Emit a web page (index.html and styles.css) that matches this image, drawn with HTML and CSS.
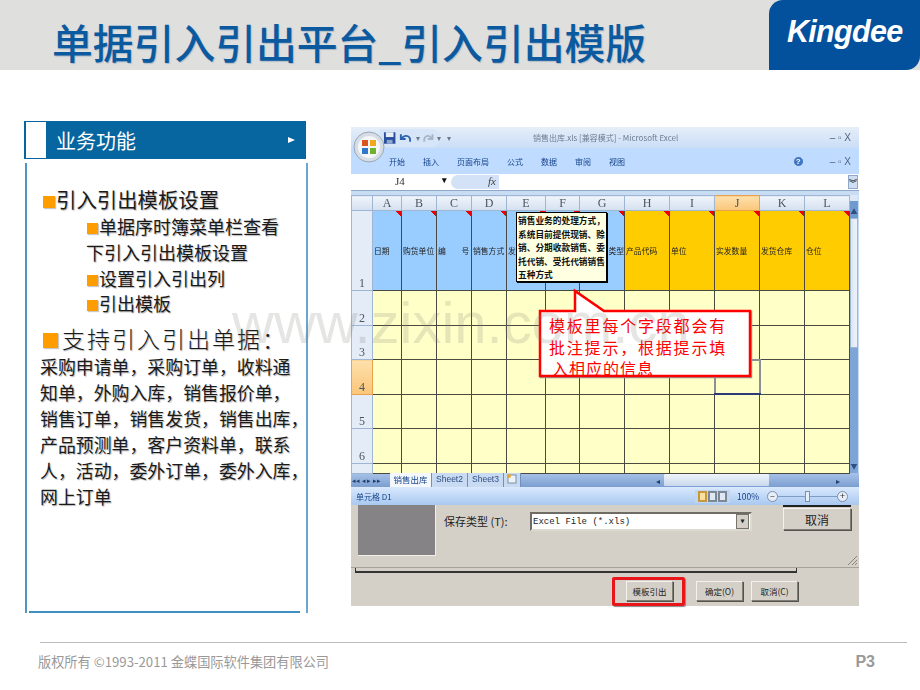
FILE: index.html

```html
<!DOCTYPE html>
<html lang="zh-CN">
<head>
  <meta charset="UTF-8">
  <title>单据引入引出平台_引入引出模版</title>
  <link rel="stylesheet" href="styles.css">
</head>
<body>
  <div class="slide">
    <header class="top">
      <h1>单据引入引出平台_引入引出模版</h1>
      <div class="logo">Kingdee</div>
    </header>

    <main class="content">
      <section class="side">
        <div class="side-title">
          <span class="side-box"></span>
          <span class="side-name">业务功能</span>
          <span class="side-arrow"></span>
        </div>
        <div class="side-panel">
          <p class="lv1"><i class="dot"></i>引入引出模板设置</p>
          <p class="lv2"><i class="dot small"></i>单据序时簿菜单栏查看</p>
          <p class="lv2">下引入引出模板设置</p>
          <p class="lv2"><i class="dot small"></i>设置引入引出列</p>
          <p class="lv2"><i class="dot small"></i>引出模板</p>
          <p class="lv1 big"><i class="dot large"></i>支持引入引出单据：</p>
          <p class="bills">采购申请单，采购订单，收料通<br>知单，外购入库，销售报价单，<br>销售订单，销售发货，销售出库，<br>产品预测单，客户资料单，联系<br>人，活动，委外订单，委外入库，<br>网上订单</p>
        </div>
      </section>

      <section class="shot">
        <div class="xl">
          <div class="xl-title">
            <div class="qat">
              <svg width="14" height="14" viewBox="0 0 14 14"><rect x="1" y="1" width="12" height="12" fill="#2a4f9c"/><rect x="3" y="1" width="8" height="5" fill="#e8eef8"/><rect x="4" y="9" width="6" height="4" fill="#8fa8d0"/></svg>
              <svg width="16" height="14" viewBox="0 0 16 14"><path d="M3 3v5h5M3.500 8C6 4 10 4 12 6.500c1 1.500 1 3 .5 4.500" fill="none" stroke="#2b62b0" stroke-width="2"/></svg>
              <span class="qat-drop">▾</span>
              <svg width="14" height="14" viewBox="0 0 14 14"><path d="M11 3v5H6M10.500 8C8 4 5 4 3 6.500c-1 1.500-1 3-.5 4.500" fill="none" stroke="#a9b6c8" stroke-width="2"/></svg>
              <span class="qat-drop">▾</span>
            </div>
            <span class="qat-more">▾</span>
            <span class="xl-name">销售出库.xls [兼容模式] - Microsoft Excel</span>
            <span class="win-btns">– ▫ X</span>
          </div>
          <div class="xl-tabs">
            <span>开始</span><span>插入</span><span>页面布局</span><span>公式</span><span>数据</span><span>审阅</span><span>视图</span>
            <span class="help">?</span>
            <span class="win-btns dark">– ▫ X</span>
          </div>
          <div class="xl-formula">
            <div class="name-box"><span>J4</span><b>▾</b></div>
            <div class="fx"><em>fx</em></div>
            <div class="formula-input"></div>
            <div class="formula-more">︾</div>
          </div>

          <div class="sheet-wrap">
            <table class="sheet">
              <colgroup>
                <col class="c-head"><col class="c-a"><col class="c-m"><col class="c-m"><col class="c-m"><col class="c-e"><col class="c-f"><col class="c-l"><col class="c-l"><col class="c-l"><col class="c-l"><col class="c-l"><col class="c-z">
              </colgroup>
              <tr class="letters">
                <th class="corner"></th><th>A</th><th>B</th><th>C</th><th>D</th><th>E</th><th>F</th><th>G</th><th>H</th><th>I</th><th class="on">J</th><th>K</th><th>L</th>
              </tr>
              <tr class="r1">
                <th>1</th>
                <td class="blue">日期</td><td class="blue">购货单位</td><td class="blue">编　　号</td><td class="blue">销售方式</td><td class="blue">发</td><td class="blue"></td><td class="blue end">务类型</td>
                <td class="gold">产品代码</td><td class="gold">单位</td><td class="gold">实发数量</td><td class="gold">发货仓库</td><td class="gold">仓位</td>
              </tr>
              <tr class="r"><th>2</th><td></td><td></td><td></td><td></td><td></td><td></td><td></td><td></td><td></td><td></td><td></td><td></td></tr>
              <tr class="r"><th>3</th><td></td><td></td><td></td><td></td><td></td><td></td><td></td><td></td><td></td><td></td><td></td><td></td></tr>
              <tr class="r"><th class="on">4</th><td></td><td></td><td></td><td></td><td></td><td></td><td></td><td></td><td></td><td class="picked"></td><td></td><td></td></tr>
              <tr class="r"><th>5</th><td></td><td></td><td></td><td></td><td></td><td></td><td></td><td></td><td></td><td></td><td></td><td></td></tr>
              <tr class="r"><th>6</th><td></td><td></td><td></td><td></td><td></td><td></td><td></td><td></td><td></td><td></td><td></td><td></td></tr>
              <tr class="r-cut"><th></th><td></td><td></td><td></td><td></td><td></td><td></td><td></td><td></td><td></td><td></td><td></td><td></td></tr>
            </table>
            <div class="vscroll">
              <span class="v-cap"></span>
              <span class="v-up">▲</span>
              <span class="v-thumb"></span>
              <span class="v-down">▼</span>
            </div>
          </div>

          <div class="sheet-tabs">
            <span class="tab-nav">◂◂ ◂ ▸ ▸▸</span>
            <span class="tab active">销售出库</span>
            <span class="tab">Sheet2</span>
            <span class="tab">Sheet3</span>
            <span class="tab add">
              <svg width="12" height="11" viewBox="0 0 12 11"><rect x="2" y="2" width="8" height="8" fill="#eef3fa" stroke="#7f8fa8"/><circle cx="3" cy="3" r="2" fill="#e6a92f"/></svg>
            </span>
            <div class="hscroll"><span class="h-left">◂</span><span class="h-thumb"></span><span class="h-right">▸</span></div>
          </div>

          <div class="status">
            <span class="status-text">单元格 D1</span>
            <div class="status-views"><i class="view on"></i><i class="view"></i><i class="view"></i></div>
            <span class="zoom-val">100%</span>
            <span class="zoom-btn">–</span>
            <span class="zoom-track"><i></i></span>
            <span class="zoom-btn">+</span>
          </div>
        </div>

        <div class="dialog">
          <div class="preview"></div>
          <label class="type-label">保存类型 (T):</label>
          <div class="type-select"><span>Excel File (*.xls)</span><b>▾</b></div>
          <div class="dialog-side"><button class="win-btn wide">取消</button></div>
          <svg class="grip" width="12" height="12" viewBox="0 0 12 12"><path d="M11 2 2 11M11 6l-5 5M11 9l-2 2" stroke="#8a877f" fill="none"/></svg>
        </div>
        <div class="frame-line"></div>
        <div class="actions">
          <div class="mark"><button class="win-btn">模板引出</button></div>
          <button class="win-btn">确定(O)</button>
          <button class="win-btn">取消(C)</button>
        </div>

        <div class="comment">销售业务的处理方式，<br>系统目前提供现销、赊<br>销、分期收款销售、委<br>托代销、受托代销销售<br>五种方式</div>
        <div class="callout">
          <svg width="216" height="92" viewBox="0 0 216 92"><path d="M2 23H37V3L66 23H212V88H2Z" fill="#fff" stroke="#ff0000" stroke-width="2.500"/></svg>
          <p>模板里每个字段都会有<br>批注提示，根据提示填<br><span>入相应的信息</span></p>
        </div>
        <!-- Office button sits over the title bar and the ribbon -->
        <svg class="orb" width="32" height="32" viewBox="0 0 32 32">
          <circle cx="16" cy="16" r="15" fill="#d6dde6" stroke="#9aa7b6"/>
          <circle cx="16" cy="16" r="11" fill="#f4f6f8"/>
          <rect x="9" y="9" width="6" height="6" fill="#d9541e"/>
          <rect x="17" y="9" width="6" height="6" fill="#f0a81c"/>
          <rect x="9" y="17" width="6" height="6" fill="#2f77c8"/>
          <rect x="17" y="17" width="6" height="6" fill="#6fb22e"/>
        </svg>
      </section>
    </main>

    <footer class="foot">
      <span>版权所有 ©1993-2011 金蝶国际软件集团有限公司</span>
      <b>P3</b>
    </footer>

    <div class="stamp">www.zixin.com.cn</div>
  </div>
</body>
</html>
```

FILE: styles.css

```css
* {
  box-sizing: border-box;
}
body {
  margin: 0;
  background-color: #ffffff;
  font-family: "Noto Sans CJK SC", "Liberation Sans", sans-serif;
}
p, h1 {
  margin: 0;
}
.slide {
  position: relative;
  width: 920px;
  height: 690px;
  overflow: hidden;
  background-color: #ffffff;
}

/* title band */
.top {
  display: flex;
  justify-content: space-between;
  align-items: stretch;
  height: 70px;
  background-color: #dfdfdd;
}
.top h1 {
  padding: 12px 0 0 52px;
  font-size: 40.800px;
  font-weight: 500;
  line-height: 60px;
  color: #0b5a9f;
  text-shadow: 1px 1px 1px #a9b8c8;
  white-space: nowrap;
}
.logo {
  width: 151px;
  padding: 8px 0 0 18px;
  background-color: #03509c;
  border-radius: 14px 0 14px 0;
  font-family: "Liberation Sans", sans-serif;
  font-size: 30.500px;
  font-style: italic;
  font-weight: bold;
  line-height: 46px;
  letter-spacing: -0.700px;
  color: #ffffff;
}

.content {
  display: flex;
  align-items: flex-start;
  padding: 51px 0 0 24px;
}

/* left column */
.side {
  width: 282px;
  margin-right: 45px;
}
.side-title {
  display: flex;
  align-items: center;
  height: 38px;
  padding-left: 2px;
  background-color: #07659f;
}
.side-box {
  width: 20px;
  height: 36px;
  background-color: #ffffff;
}
.side-name {
  margin-left: 10px;
  font-size: 20px;
  color: #ffffff;
}
.side-arrow {
  margin-left: 152px;
  border-left: 7px solid #ffffff;
  border-top: 3.500px solid transparent;
  border-bottom: 3.500px solid transparent;
}
.side-panel {
  width: 283px;
  height: 450px;
  margin: 4px 0 0 1px;
  padding-top: 22px;
  border-left: 2px solid #4f95c4;
  border-right: 2px solid #6aa6cf;
  background: linear-gradient(#3f8fc0, #3f8fc0) no-repeat 2px 100% / 271px 2px;
  color: #1a1a1a;
  text-shadow: 1px 1px 1px #b4b4b4;
}
.dot {
  display: inline-block;
  width: 12px;
  height: 12px;
  margin-right: 1px;
  background-color: #ff9c00;
  box-shadow: 1px 1px 1px #c8c8c8;
}
.dot.small {
  width: 11px;
  height: 11px;
  margin-left: 1px;
}
.dot.large {
  width: 15px;
  height: 15px;
  margin-right: 4px;
}
.lv1 {
  margin-bottom: 1px;
  padding-left: 16px;
  font-size: 20.400px;
  line-height: 28px;
  white-space: nowrap;
}
.lv2 {
  padding-left: 59px;
  font-size: 18px;
  line-height: 25.800px;
  white-space: nowrap;
}
.lv1.big {
  margin: 6px 0 0;
  font-size: 23px;
  font-weight: 300;
  line-height: 30px;
  letter-spacing: 2px;
}
/* TC glyphs set the full-width comma in the middle of its cell */
.bills {
  padding-left: 13px;
  font-family: "Noto Sans CJK TC", "Noto Sans CJK SC", sans-serif;
  font-size: 17.900px;
  line-height: 26px;
  white-space: nowrap;
}

/* spreadsheet picture on the right */
.shot {
  position: relative;
  width: 508px;
  height: 479px;
  margin-top: 6px;
  background-color: #d4d0c8;
  font-size: 8px;
}
.xl {
  height: 378px;
  background-color: #bfdbff;
  filter: blur(0.3px);
}
.xl-title {
  display: flex;
  align-items: center;
  height: 21px;
  padding-left: 29px;
  background: linear-gradient(#e6eef9, #cadef7);
  color: #6e7c90;
}
.qat {
  display: flex;
  align-items: center;
  gap: 2px;
  width: 61px;
  height: 18px;
  padding-left: 3px;
  background-color: #d7e5f8;
  border-radius: 0 9px 9px 0;
}
.qat-drop, .qat-more {
  font-size: 8px;
  color: #6a7a8e;
}
.qat-more {
  margin-left: 6px;
}
.xl-name {
  margin-left: 82px;
  white-space: nowrap;
}
.win-btns {
  margin-left: auto;
  padding-right: 8px;
  font-family: "Liberation Sans", sans-serif;
  font-size: 10px;
  color: #54657c;
  white-space: pre;
}
.win-btns.dark {
  margin-left: 8px;
}
.xl-tabs {
  display: flex;
  align-items: center;
  gap: 18px;
  height: 26px;
  padding-left: 38px;
  background-color: #bfdbff;
  color: #15428b;
}
.help {
  width: 11px;
  height: 11px;
  margin-left: auto;
  background-color: #3b76c8;
  border: 1px solid #d4e4f8;
  border-radius: 50%;
  font-family: "Liberation Sans", sans-serif;
  font-size: 8px;
  font-weight: bold;
  line-height: 9px;
  text-align: center;
  color: #ffffff;
}
.xl-formula {
  display: flex;
  height: 17px;
  padding: 1px;
  border-bottom: 1px solid #8fa8c8;
  background-color: #ffffff;
}
.name-box {
  display: flex;
  justify-content: space-between;
  width: 99px;
  padding: 0 4px 0 43px;
  font-family: "Liberation Serif", serif;
  font-size: 11px;
  color: #333333;
}
.name-box b {
  font-size: 9px;
  color: #111111;
}
.fx {
  width: 48px;
  padding-right: 3px;
  background-color: #d3e2f6;
  border-radius: 8px 0 0 8px;
  font-family: "Liberation Serif", serif;
  font-size: 11px;
  text-align: right;
  color: #444444;
}
.formula-input {
  flex: 1;
}
.formula-more {
  width: 10px;
  background-color: #cfdef2;
  border: 1px solid #8fa8c8;
  font-size: 8px;
  font-weight: bold;
  line-height: 13px;
  text-align: center;
  color: #222222;
}
.sheet-wrap {
  display: flex;
  height: 282px;
  padding: 4px 1px 0 0;
  background-color: #c8dcf4;
}
.sheet {
  width: 497px;
  height: 278px;
  border-collapse: collapse;
  table-layout: fixed;
}
.c-head { width: 21px; }
.c-a { width: 29px; }
.c-m { width: 35px; }
.c-e { width: 39px; }
.c-f { width: 34px; }
.c-l { width: 45px; }
.c-z { width: 45px; }
.sheet th {
  padding: 0;
  background-color: #e4ecf7;
  border: 1px solid #9fb6d2;
  font-family: "Liberation Serif", serif;
  font-size: 12px;
  font-weight: normal;
  line-height: 14px;
  color: #4a5560;
  vertical-align: bottom;
}
.sheet th.on {
  background: linear-gradient(#fde0ac, #fbc67a);
  border-color: #e8a24c;
}
.sheet td {
  padding: 0;
  background-color: #ffffc8;
  border: 1px solid #4a4a40;
}
.letters {
  height: 15px;
}
.letters th {
  background: linear-gradient(#f0f4fa, #d4e0f0);
  vertical-align: middle;
}
.r1 {
  height: 80px;
}
.r1 td {
  padding-left: 1px;
  font-size: 7.800px;
  color: #222222;
  white-space: nowrap;
  overflow: hidden;
  background-repeat: no-repeat;
  background-image: linear-gradient(225deg, #ee0000 4px, transparent 4px);
}
.sheet td.blue {
  background-color: #99ccff;
}
.sheet td.gold {
  background-color: #ffcc00;
}
.sheet td.end {
  text-align: right;
}
.sheet td.picked {
  border: 2px solid #8a8f98;
  border-bottom-color: #2c3a78;
}
.r {
  height: 34.500px;
}
.r-cut {
  height: 10px;
}
.vscroll {
  display: flex;
  flex-direction: column;
  width: 10px;
  background-color: #7fa5d6;
  font-size: 7px;
  text-align: center;
  color: #2f4f7f;
}
.v-cap {
  height: 6px;
  background-color: #dce8f8;
}
.v-up {
  height: 17px;
  padding-top: 5px;
  background-color: #6f9ad0;
}
.v-thumb {
  height: 130px;
  background: linear-gradient(90deg, #dbe6f5, #eef3fa);
  border: 1px solid #9db4d2;
}
.v-down {
  margin-top: auto;
  height: 12px;
}
.sheet-tabs {
  display: flex;
  align-items: stretch;
  height: 14px;
  padding-left: 1px;
  background: linear-gradient(#a9c3e8, #7b9ed0);
  color: #2d4e80;
}
.tab-nav {
  width: 38px;
  font-size: 7px;
  line-height: 14px;
  white-space: nowrap;
  overflow: hidden;
  color: #1f3f70;
}
.tab {
  width: 36px;
  font-family: "Liberation Sans", sans-serif;
  font-size: 8.500px;
  line-height: 13px;
  text-align: center;
  background-color: #c9dbf3;
  border-right: 1px solid #6f8fbc;
}
.tab.active {
  width: 42px;
  background-color: #f4f8fd;
  font-family: "Noto Sans CJK SC", sans-serif;
  color: #15428b;
}
.tab.add {
  width: 17px;
}
.hscroll {
  display: flex;
  align-items: center;
  width: 197px;
  margin: 0 10px 0 auto;
  font-size: 8px;
  color: #1f3f70;
}
.h-left {
  width: 12px;
  padding-left: 4px;
}
.h-thumb {
  width: 105px;
  height: 12px;
  background: linear-gradient(#f0f4fa, #c8d8ec);
  border-radius: 1px;
}
.h-right {
  margin-left: auto;
  padding-right: 9px;
}
.status {
  display: flex;
  align-items: center;
  height: 18px;
  padding-left: 5px;
  background: linear-gradient(#d9e9fd, #a9c8f0);
  color: #15428b;
}
.status-text {
  width: 339px;
}
.status-views {
  display: flex;
  gap: 1px;
  padding: 1px 3px;
  background-color: #c3d6ef;
}
.view {
  width: 9px;
  height: 11px;
  background-color: #dfe8f4;
  border: 2px solid #7b8896;
}
.view.on {
  background-color: #fbe0a0;
  border-color: #c69a3c;
}
.zoom-val {
  width: 30px;
  margin-left: 7px;
  font-size: 8.500px;
}
.zoom-btn {
  width: 11px;
  height: 11px;
  background-color: #e6eef9;
  border: 1px solid #7f8fa8;
  border-radius: 50%;
  font-size: 9px;
  line-height: 8px;
  text-align: center;
  color: #333333;
}
.zoom-track {
  display: flex;
  justify-content: center;
  align-items: center;
  width: 59px;
  height: 1px;
  background-color: #7f9cc4;
}
.zoom-track i {
  width: 5px;
  height: 11px;
  background-color: #e6eef9;
  border: 1px solid #7f8fa8;
}

/* file dialog left behind the window */
.dialog {
  display: flex;
  height: 63px;
  padding-left: 7px;
  border-bottom: 1px solid #a5a29b;
  position: relative;
  background-color: #d4d0c8;
}
.preview {
  width: 78px;
  height: 51px;
  background-color: #868386;
  border-right: 1px solid #f0eee8;
  border-bottom: 1px solid #f0eee8;
}
.type-label {
  margin: 8px 0 0 8px;
  width: 86px;
  font-size: 11px;
  color: #222222;
}
.type-select {
  display: flex;
  justify-content: space-between;
  align-items: center;
  width: 222px;
  height: 19px;
  margin-top: 7px;
  padding: 0 1px 0 1px;
  background-color: #ffffff;
  border: 2px solid #6f6c66;
  border-bottom-color: #dddad2;
  border-right-color: #dddad2;
  font-family: "Liberation Mono", monospace;
  font-size: 9px;
  color: #222222;
}
.type-select b {
  width: 13px;
  background-color: #d4d0c8;
  border: 1px solid #77746c;
  font-size: 10px;
  line-height: 13px;
  text-align: center;
}
.dialog-side {
  margin-left: 31px;
  padding-top: 1px;
  border-top: 2px solid #222222;
  height: 28px;
}
.win-btn {
  width: 47px;
  height: 20px;
  padding: 0;
  background-color: #d4d0c8;
  border: 1px solid #7f7c75;
  border-top-color: #f4f2ec;
  border-left-color: #f4f2ec;
  box-shadow: 1px 1px 0 #55534e;
  font-family: inherit;
  font-size: 8.500px;
  color: #222222;
}
.win-btn.wide {
  width: 68px;
  height: 22px;
  font-size: 12px;
}
.grip {
  position: absolute;
  right: 1px;
  bottom: 1px;
}
.frame-line {
  width: 442px;
  height: 5px;
  margin-left: 4px;
  background-color: #d4d0c8;
  border-bottom: 2px solid #333333;
  border-right: 1px solid #333333;
  border-left: 1px solid #333333;
}
.actions {
  display: flex;
  align-items: flex-start;
  gap: 8px;
  padding: 8px 0 0 261px;
}
.mark {
  width: 73px;
  height: 29px;
  margin: -4px 3px 0 0;
  padding: 1px 0 0 11px;
  border: 3px solid #e8151b;
  border-radius: 2px;
  box-shadow: 1px 1px 1px #888888;
}

/* notes lying over the sheet */
.comment {
  position: absolute;
  left: 165px;
  top: 85px;
  width: 91px;
  height: 70px;
  padding: 1px 0 0 1px;
  background-color: #ffffe1;
  border: 1px solid #000000;
  box-shadow: 1px 1px 0 #000000;
  font-size: 8.700px;
  font-weight: bold;
  line-height: 13.500px;
  color: #111111;
  white-space: nowrap;
}
.callout {
  position: absolute;
  left: 187px;
  top: 161px;
  width: 216px;
  height: 92px;
}
.callout svg {
  position: absolute;
  left: 0;
  top: 0;
  filter: drop-shadow(1px 1px 0 #999999);
}
.callout p {
  position: relative;
  padding: 27px 0 0 11px;
  font-size: 16px;
  line-height: 21.500px;
  letter-spacing: 1.800px;
  color: #ff0000;
  white-space: nowrap;
}
.callout span {
  margin-left: 3px;
  letter-spacing: 1px;
}
.orb {
  position: absolute;
  left: 2px;
  top: 4px;
}

.foot {
  position: absolute;
  left: 40px;
  right: 13px;
  top: 642px;
  display: flex;
  justify-content: space-between;
  align-items: center;
  height: 38px;
  border-top: 1px solid #bbbbbb;
  font-size: 13.200px;
  color: #999999;
}
.foot span {
  margin-left: -2px;
}
.foot b {
  margin-right: 32px;
  font-family: "Liberation Sans", sans-serif;
  font-size: 16px;
  color: #999999;
}

/* pale site address printed across the slide */
.stamp {
  position: absolute;
  left: 232px;
  top: 288px;
  font-family: "Liberation Sans", sans-serif;
  font-size: 58px;
  line-height: 70px;
  color: rgba(125, 125, 115, 0.2);
  white-space: nowrap;
  pointer-events: none;
}
```
